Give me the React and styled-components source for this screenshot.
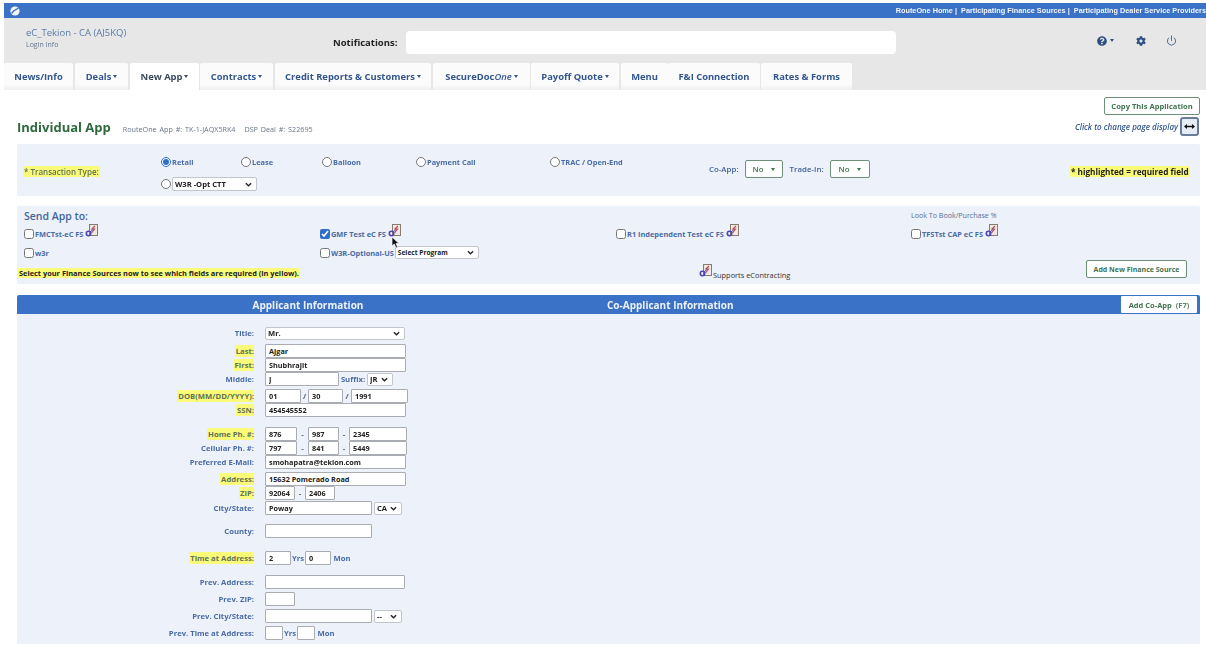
import styled, { createGlobalStyle } from "styled-components";
import { FaCog, FaQuestionCircle } from "react-icons/fa";
import { Power } from "lucide-react";

const GlobalStyle = createGlobalStyle`
  html, body {
    margin: 0;
    background: #fff;
    font-family: "Open Sans", "Liberation Sans", sans-serif;
  }
  * {
    box-sizing: border-box;
  }
`;

const chevron =
  "url(\"data:image/svg+xml,%3Csvg xmlns='http://www.w3.org/2000/svg' viewBox='0 0 8 5'%3E%3Cpath d='M1 1l3 3 3-3' fill='none' stroke='%23222' stroke-width='1.5'/%3E%3C/svg%3E\")";

const Page = styled.div`
  width: 1206px;
  height: 645px;
  overflow: hidden;
  padding-top: 3px;
  filter: blur(0.3px);
`;

// Top of page
const TopBar = styled.div`
  height: 15px;
  margin-left: 4px;
  padding: 0 0 0 6px;
  background: #3a72c7;
  display: flex;
  align-items: center;
  justify-content: space-between;
`;

const TopLinks = styled.div`
  font-family: "Liberation Sans", sans-serif;
  font-size: 7.3px;
  font-weight: 700;
  color: #f2f5fb;
  white-space: nowrap;
`;

const Header = styled.div`
  margin-left: 4px;
  background: #e7e7e7;
`;

const HeaderTop = styled.div`
  height: 45px;
  display: flex;
  align-items: center;
  padding: 4px 0 0 22px;
`;

const Account = styled.div`
  width: 307px;
  color: #5a7aa8;
  font-size: 9.5px;
  line-height: 12px;
  margin-top: -9px;
`;

const LoginInfo = styled.div`
  font-size: 7px;
  line-height: 11px;
  color: #66788f;
`;

const NotifyLabel = styled.div`
  width: 73px;
  font-size: 9.5px;
  font-weight: 700;
  color: #222;
`;

const NotifyBox = styled.div`
  width: 490px;
  height: 23px;
  background: #fff;
  border-radius: 4px;
`;

const HeaderIcons = styled.div`
  display: flex;
  align-items: center;
  color: #2f4f80;
  margin: -4px 0 0 201px;
`;

const IconSlot = styled.div`
  width: ${(p) => p.$w}px;
  display: flex;
  align-items: center;
  gap: 3px;
`;

const Tabs = styled.div`
  height: 27px;
  display: flex;
  align-items: stretch;
`;

const Tab = styled.div`
  width: ${(p) => p.$w}px;
  margin-right: ${(p) => p.$gap ?? 2}px;
  display: flex;
  align-items: center;
  justify-content: center;
  gap: 2px;
  font-size: 9.4px;
  font-weight: 700;
  color: ${(p) => (p.$active ? "#3d4a5c" : "#33568f")};
  background: ${(p) =>
    p.$active ? "#fff" : "linear-gradient(#fbfbfb 80%, #efefef)"};
  border-radius: 2px 2px 0 0;
  white-space: nowrap;
  em {
    font-weight: 600;
  }
`;

const Caret = styled.span`
  width: 0;
  height: 0;
  border-left: 2.5px solid transparent;
  border-right: 2.5px solid transparent;
  border-top: 3px solid currentColor;
`;

// Title area
const TitleArea = styled.div`
  margin: 0 6px 0 17px;
  height: 55px;
  border-bottom: 1px solid #eef1f7;
  display: flex;
  justify-content: space-between;
`;

const TitleLeft = styled.div`
  display: flex;
  align-items: baseline;
  gap: 12px;
  padding-top: 29px;
`;

const PageTitle = styled.h1`
  margin: 0;
  font-size: 13px;
  line-height: 16px;
  font-weight: 700;
  color: #2f6a3e;
`;

const AppInfo = styled.div`
  font-size: 7.2px;
  color: #6a7689;
  word-spacing: 1px;
  span {
    margin-left: 9px;
  }
`;

const TitleRight = styled.div`
  display: flex;
  flex-direction: column;
  align-items: flex-end;
  padding-top: 7px;
`;

const GreenButton = styled.button`
  width: ${(p) => p.$w}px;
  height: 18px;
  padding: 0;
  background: #fff;
  border: 1px solid #6d9078;
  border-radius: 2px;
  font-family: inherit;
  font-size: ${(p) => p.$size ?? 7.6}px;
  font-weight: 700;
  color: #3f7350;
`;

const DisplayRow = styled.div`
  display: flex;
  align-items: center;
  gap: 2px;
  margin-top: 2px;
  font-size: 8px;
  font-style: italic;
  font-weight: 600;
  color: #35598f;
`;

const ToggleButton = styled.div`
  width: 19px;
  height: 19px;
  margin-right: 1px;
  border: 2px solid #6b7b9b;
  border-radius: 3px;
  background: #e6ecf6;
  display: flex;
  align-items: center;
  justify-content: center;
`;

// Panels
const Panel = styled.div`
  margin: ${(p) => p.$top ?? 0}px 6px 0 17px;
  height: ${(p) => p.$h}px;
  background: #edf1f9;
  border-radius: 2px;
`;

const TransactionPanel = styled(Panel)`
  display: flex;
`;

const LabelCell = styled.div`
  width: 144px;
  padding: 19px 0 0 6px;
  line-height: 11px;
`;

const Required = styled.span`
  background: #fbfb7a;
  font-size: ${(p) => p.$size ?? 8}px;
  font-weight: ${(p) => p.$weight ?? 600};
  color: ${(p) => p.$color ?? "#5f7355"};
  padding: 0 1px;
  white-space: nowrap;
`;

const RadioArea = styled.div`
  width: 548px;
  padding-top: 11px;
`;

const RadioRow = styled.div`
  display: flex;
`;

const Radio = styled.label`
  width: ${(p) => p.$w}px;
  display: flex;
  align-items: center;
  gap: 1px;
  font-size: 7.4px;
  font-weight: 700;
  color: #4a6ca5;
  white-space: nowrap;
  height: 12px;
`;

const RadioInput = styled.input`
  width: 10px;
  height: 10px;
  margin: 0;
  accent-color: #2f6fc9;
`;

const ProgramRow = styled.div`
  display: flex;
  align-items: center;
  gap: 1px;
  margin-top: 9px;
`;

const NativeSelect = styled.select`
  appearance: none;
  width: ${(p) => p.$w}px;
  height: ${(p) => p.$h ?? 14}px;
  padding: 0 0 0 2px;
  background: #fff ${chevron} no-repeat right 4px center / 7px 5px;
  border: 1px solid #c2c6cc;
  border-radius: 2px;
  font-family: inherit;
  font-size: ${(p) => p.$size ?? 7.6}px;
  font-weight: 700;
  color: #222;
`;

const CoAppArea = styled.div`
  width: 361px;
  display: flex;
  align-items: center;
  height: 18px;
  margin-top: 15px;
  font-size: 7.9px;
  font-weight: 600;
  color: #41649c;
`;

const NoButton = styled.div`
  width: ${(p) => p.$w}px;
  height: 18px;
  margin: 0 7px 0 6px;
  background: #fff;
  border: 1px solid #6d9078;
  border-radius: 2px;
  color: #3f7350;
  display: flex;
  align-items: center;
  justify-content: center;
  gap: 7px;
`;

const RequiredNote = styled.div`
  padding-top: 19px;
  line-height: 11px;
`;

const SendPanel = styled(Panel)`
  position: relative;
  padding: 3px 13px 0 7px;
  display: flex;
  flex-direction: column;
`;

const SendTitleRow = styled.div`
  display: grid;
  grid-template-columns: 887px 1fr;
  align-items: center;
  height: 13px;
`;

const SendTitle = styled.div`
  font-size: 10.5px;
  font-weight: 600;
  color: #3f659f;
`;

const LookTo = styled.div`
  font-size: 7.1px;
  color: #5b6f90;
  margin-top: -3px;
`;

const SourceGrid = styled.div`
  display: grid;
  grid-template-columns: 296px 296px 295px 1fr;
  grid-auto-rows: 19px;
  margin-top: 2px;
`;

const Source = styled.label`
  display: flex;
  align-items: center;
  gap: 1px;
  font-size: 7.4px;
  font-weight: 700;
  color: #4a6ca5;
  white-space: nowrap;
`;

const CheckInput = styled.input`
  width: 10px;
  height: 10px;
  margin: 0;
  accent-color: #2f6fc9;
`;

const IconWrap = styled.span`
  margin: -5px 0 0 1px;
  line-height: 0;
`;

const SendFooter = styled.div`
  display: flex;
  align-items: flex-end;
  margin: -2px 0 0 -6px;
`;

const SelectNote = styled.div`
  width: 681px;
  line-height: 10px;
`;

const SupportsNote = styled.div`
  width: 387px;
  display: flex;
  align-items: flex-end;
  gap: 1px;
  font-size: 7.4px;
  color: #333;
  line-height: 6px;
`;

const ApplicantBar = styled.div`
  margin: 11px 6px 0 17px;
  height: 19px;
  background: #3a72c7;
  border-radius: 2px 2px 0 0;
  display: flex;
  align-items: center;
  font-size: 10px;
  font-weight: 700;
  color: #eef2fa;
`;

const BarTitle = styled.div`
  width: ${(p) => p.$w}px;
  padding-left: ${(p) => p.$pad ?? 0}px;
  text-align: ${(p) => p.$align ?? "center"};
`;

const CoAppButton = styled.button`
  width: 76px;
  height: 17px;
  padding: 0;
  background: #fff;
  border: 0;
  border-radius: 1px;
  font-family: inherit;
  font-size: 7.5px;
  font-weight: 700;
  color: #3f7350;
  span {
    margin-left: 4px;
    color: #5d8468;
  }
`;

// Form
const FormPanel = styled.div`
  margin: 0 6px 0 17px;
  height: 330px;
  padding-top: 12px;
  background: #edf1f9;
`;

const Row = styled.div`
  display: flex;
  align-items: center;
  height: 14px;
  margin-top: ${(p) => p.$top ?? 0}px;
`;

const LabelCol = styled.div`
  width: 237px;
  margin-right: 11px;
  text-align: right;
  font-size: 7.7px;
  font-weight: 700;
  color: #4a6ca5;
  white-space: nowrap;
`;

const RequiredLabel = styled.span`
  background: #fbfb7a;
  color: #5f7355;
  padding: 1px 0 1px 1px;
`;

const Input = styled.input`
  width: ${(p) => p.$w}px;
  height: 14px;
  padding: 0 3px;
  margin: 0;
  background: #fff;
  border: 1px solid #a9adb3;
  border-radius: 1px;
  font-family: inherit;
  font-size: 7.3px;
  font-weight: 700;
  color: #222;
  outline: none;
`;

const Sep = styled.span`
  width: ${(p) => p.$w}px;
  text-align: center;
  font-size: 7.7px;
  font-weight: 700;
  color: ${(p) => p.$color ?? "#5a6472"};
  white-space: nowrap;
`;

const PointerWrap = styled.div`
  position: absolute;
  left: 374px;
  top: 30px;
  line-height: 0;
`;

function SourceIcon() {
  return (
    <svg width="13" height="14" viewBox="0 0 13 14">
      <rect x="4.5" y="0.5" width="8" height="11" fill="#efe9e4" stroke="#8a7a70" />
      <path d="M10 2 L7 5 L9.5 5 L6.5 9" fill="none" stroke="#b4505c" strokeWidth="1.2" />
      <circle cx="3.5" cy="9.5" r="2.2" fill="none" stroke="#4f46b4" strokeWidth="1.6" />
      <path d="M5 8 L8 5.5" stroke="#4f46b4" strokeWidth="1" />
    </svg>
  );
}

function Logo() {
  return (
    <svg width="10" height="10" viewBox="0 0 10 10">
      <circle cx="5" cy="5" r="4.6" fill="#f4f6fa" />
      <path d="M1.5 7.5 Q4 4 8.5 2.2" fill="none" stroke="#3a72c7" strokeWidth="1.3" />
    </svg>
  );
}

function Pointer() {
  return (
    <PointerWrap>
      <svg width="9" height="13" viewBox="0 0 9 13">
        <path
          d="M1 1 L1 10 L3.3 8 L5 12 L6.6 11.3 L5 7.5 L8 7.5 Z"
          fill="#111"
          stroke="#fff"
          strokeWidth="0.7"
        />
      </svg>
    </PointerWrap>
  );
}

function Field({ label, required, top, children }) {
  return (
    <Row $top={top}>
      <LabelCol>
        {required ? <RequiredLabel>{label}</RequiredLabel> : label}
      </LabelCol>
      {children}
    </Row>
  );
}

const sources = [
  { name: "FMCTst-eC FS" },
  { name: "GMF Test eC FS", checked: true },
  { name: "R1 Independent Test eC FS" },
  { name: "TFSTst CAP eC FS" },
];

const tabs = [
  { name: "News/Info", w: 69 },
  { name: "Deals", w: 53, caret: true },
  { name: "New App", w: 69, caret: true, active: true, gap: 1 },
  { name: "Contracts", w: 73, caret: true },
  { name: "Credit Reports & Customers", w: 156, caret: true },
  { name: "SecureDoc", one: true, w: 97, caret: true, gap: 1 },
  { name: "Payoff Quote", w: 88, caret: true },
  { name: "Menu", w: 47, gap: 0 },
  { name: "F&I Connection", w: 92, gap: 1 },
  { name: "Rates & Forms", w: 91 },
];

function App() {
  return (
    <Page>
      <GlobalStyle />
      <TopBar>
        <Logo />
        <TopLinks>
          RouteOne Home | &nbsp;Participating Finance Sources | &nbsp;Participating Dealer Service Providers
        </TopLinks>
      </TopBar>

      <Header>
        <HeaderTop>
          <Account>
            eC_Tekion - CA (AJ5KQ)
            <LoginInfo>Login Info</LoginInfo>
          </Account>
          <NotifyLabel>Notifications:</NotifyLabel>
          <NotifyBox />
          <HeaderIcons>
            <IconSlot $w={39}>
              <FaQuestionCircle size={10} />
              <Caret />
            </IconSlot>
            <IconSlot $w={30}>
              <FaCog size={10} />
            </IconSlot>
            <IconSlot $w={12}>
              <Power size={11} strokeWidth={1.8} />
            </IconSlot>
          </HeaderIcons>
        </HeaderTop>
        <Tabs>
          {tabs.map((tab) => (
            <Tab key={tab.name} $w={tab.w} $gap={tab.gap} $active={tab.active}>
              <span>
                {tab.name}
                {tab.one && <em>One</em>}
              </span>
              {tab.caret && <Caret />}
            </Tab>
          ))}
        </Tabs>
      </Header>

      <TitleArea>
        <TitleLeft>
          <PageTitle>Individual App</PageTitle>
          <AppInfo>
            RouteOne App #: TK-1-JAQX5RK4<span>DSP Deal #: S22695</span>
          </AppInfo>
        </TitleLeft>
        <TitleRight>
          <GreenButton $w={96}>Copy This Application</GreenButton>
          <DisplayRow>
            Click to change page display
            <ToggleButton>
              <svg width="11" height="5" viewBox="0 0 11 5">
                <path d="M0 2.5 L3 0 V1.7 H8 V0 L11 2.5 L8 5 V3.3 H3 V5 Z" fill="#111" />
              </svg>
            </ToggleButton>
          </DisplayRow>
        </TitleRight>
      </TitleArea>

      <TransactionPanel $h={51}>
        <LabelCell>
          <Required>* Transaction Type:</Required>
        </LabelCell>
        <RadioArea>
          <RadioRow>
            <Radio $w={80}>
              <RadioInput type="radio" name="tt" defaultChecked />
              Retail
            </Radio>
            <Radio $w={81}>
              <RadioInput type="radio" name="tt" />
              Lease
            </Radio>
            <Radio $w={94}>
              <RadioInput type="radio" name="tt" />
              Balloon
            </Radio>
            <Radio $w={134}>
              <RadioInput type="radio" name="tt" />
              Payment Call
            </Radio>
            <Radio $w={80}>
              <RadioInput type="radio" name="tt" />
              TRAC / Open-End
            </Radio>
          </RadioRow>
          <ProgramRow>
            <RadioInput type="radio" name="tt" />
            <NativeSelect $w={85}>
              <option>W3R -Opt CTT</option>
            </NativeSelect>
          </ProgramRow>
        </RadioArea>
        <CoAppArea>
          Co-App:
          <NoButton $w={38}>
            No <Caret />
          </NoButton>
          Trade-In:
          <NoButton $w={40}>
            No <Caret />
          </NoButton>
        </CoAppArea>
        <RequiredNote>
          <Required $color="#222" $size={8.2} $weight={700}>* highlighted = required field</Required>
        </RequiredNote>
      </TransactionPanel>

      <SendPanel $top={10} $h={78}>
        <SendTitleRow>
          <SendTitle>Send App to:</SendTitle>
          <LookTo>Look To Book/Purchase %</LookTo>
        </SendTitleRow>
        <SourceGrid>
          {sources.map((s) => (
            <Source key={s.name}>
              <CheckInput type="checkbox" defaultChecked={s.checked} />
              {s.name}
              <IconWrap>
                <SourceIcon />
              </IconWrap>
            </Source>
          ))}
          <Source>
            <CheckInput type="checkbox" />
            w3r
          </Source>
          <Source>
            <CheckInput type="checkbox" />
            W3R-Optional-US
            <NativeSelect $w={84} $h={13} $size={6.6}>
              <option>Select Program</option>
            </NativeSelect>
          </Source>
        </SourceGrid>
        <SendFooter>
          <SelectNote>
            <Required $color="#222" $size={7.4} $weight={700}>Select your Finance Sources now to see which fields are required (in yellow).</Required>
          </SelectNote>
          <SupportsNote>
            <SourceIcon />
            Supports eContracting
          </SupportsNote>
          <GreenButton $w={101} $size={7}>Add New Finance Source</GreenButton>
        </SendFooter>
        <Pointer />
      </SendPanel>

      <ApplicantBar>
        <BarTitle $w={582}>Applicant Information</BarTitle>
        <BarTitle $w={522} $align="left" $pad={8}>
          Co-Applicant Information
        </BarTitle>
        <CoAppButton>
          Add Co-App<span>(F7)</span>
        </CoAppButton>
      </ApplicantBar>

      <FormPanel>
        <Field label="Title:">
          <NativeSelect $w={140} $h={13}>
            <option>Mr.</option>
          </NativeSelect>
        </Field>
        <Field label="Last:" required top={4}>
          <Input $w={141} defaultValue="Ajgar" />
        </Field>
        <Field label="First:" required>
          <Input $w={141} defaultValue="Shubhrajit" />
        </Field>
        <Field label="Middle:">
          <Input $w={74} defaultValue="J" />
          <Sep $w={28} $color="#4a6ca5">Suffix:</Sep>
          <NativeSelect $w={26} $h={13}>
            <option>JR</option>
          </NativeSelect>
        </Field>
        <Field label="DOB(MM/DD/YYYY):" required top={3}>
          <Input $w={36} defaultValue="01" />
          <Sep $w={7}>/</Sep>
          <Input $w={35} defaultValue="30" />
          <Sep $w={8}>/</Sep>
          <Input $w={57} defaultValue="1991" />
        </Field>
        <Field label="SSN:" required>
          <Input $w={141} defaultValue="454545552" />
        </Field>
        <Field label="Home Ph. #:" required top={10}>
          <Input $w={32} defaultValue="876" />
          <Sep $w={11}>-</Sep>
          <Input $w={31} defaultValue="987" />
          <Sep $w={10}>-</Sep>
          <Input $w={58} defaultValue="2345" />
        </Field>
        <Field label="Cellular Ph. #:">
          <Input $w={32} defaultValue="797" />
          <Sep $w={11}>-</Sep>
          <Input $w={31} defaultValue="841" />
          <Sep $w={10}>-</Sep>
          <Input $w={58} defaultValue="5449" />
        </Field>
        <Field label="Preferred E-Mail:">
          <Input $w={141} defaultValue="smohapatra@tekion.com" />
        </Field>
        <Field label="Address:" required top={3}>
          <Input $w={141} defaultValue="15632 Pomerado Road" />
        </Field>
        <Field label="ZIP:" required>
          <Input $w={30} defaultValue="92064" />
          <Sep $w={10}>-</Sep>
          <Input $w={30} defaultValue="2406" />
        </Field>
        <Field label="City/State:" top={1}>
          <Input $w={107} defaultValue="Poway" />
          <Sep $w={2} />
          <NativeSelect $w={28} $h={13}>
            <option>CA</option>
          </NativeSelect>
        </Field>
        <Field label="County:" top={9}>
          <Input $w={107} />
        </Field>
        <Field label="Time at Address:" required top={13}>
          <Input $w={26} defaultValue="2" />
          <Sep $w={14} $color="#4a6ca5">Yrs</Sep>
          <Input $w={26} defaultValue="0" />
          <Sep $w={22} $color="#4a6ca5">Mon</Sep>
        </Field>
        <Field label="Prev. Address:" top={10}>
          <Input $w={140} />
        </Field>
        <Field label="Prev. ZIP:" top={3}>
          <Input $w={30} />
        </Field>
        <Field label="Prev. City/State:" top={3}>
          <Input $w={107} />
          <Sep $w={2} />
          <NativeSelect $w={28} $h={13}>
            <option>--</option>
          </NativeSelect>
        </Field>
        <Field label="Prev. Time at Address:" top={3}>
          <Input $w={18} />
          <Sep $w={14} $color="#4a6ca5">Yrs</Sep>
          <Input $w={18} />
          <Sep $w={22} $color="#4a6ca5">Mon</Sep>
        </Field>
      </FormPanel>
    </Page>
  );
}

export default App;
